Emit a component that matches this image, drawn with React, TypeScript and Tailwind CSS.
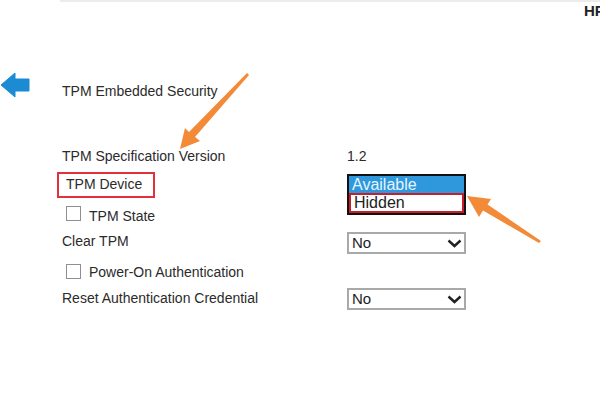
function Chevron() {
  return (
    <svg width="15" height="9" viewBox="0 0 15 9" className="shrink-0">
      <path d="M1.5 1.5 L7.5 7 L13.5 1.5" fill="none" stroke="#222" strokeWidth="2.4" />
    </svg>
  );
}

function SelectBox({ value }: { value: string }) {
  return (
    <div className="flex h-[22px] w-[119px] items-center justify-between border-2 border-[#a9a9a9] bg-white pl-[3px] pr-[2px]">
      <span className="text-[15px] leading-[16px] text-[#222]">{value}</span>
      <Chevron />
    </div>
  );
}

function Checkbox() {
  return <div className="h-[15px] w-[15px] shrink-0 border-[1.5px] border-[#8f8f8f] bg-white" />;
}

export default function App() {
  return (
    <div className="relative h-[400px] w-[600px] overflow-hidden bg-white font-['Liberation_Sans',Arial,sans-serif] text-[14px] leading-[16px] text-[#2b2b2b]">
      {/* header strip */}
      <div className="ml-[60px] h-[2px] bg-[#ececec]" />
      <div className="flex h-[17px] pl-[584px]">
        <span className="whitespace-nowrap text-[15px] font-bold leading-[17px] text-[#222]">HP</span>
      </div>

      {/* back + title */}
      <div className="mt-[53px] flex items-start">
        <svg width="30" height="26" viewBox="0 0 30 26" className="shrink-0">
          <polygon points="1,13 15,1 15,7 29,7 29,19 15,19 15,25" fill="#1b8bd3" strokeLinejoin="round" stroke="#1b8bd3" strokeWidth="1" />
        </svg>
        <div className="ml-[32px] mt-[11px]">TPM Embedded Security</div>
      </div>

      {/* settings */}
      <div className="mt-[49px] flex">
        <div className="ml-[62px] flex w-[285px] flex-col items-start">
          <div>TPM Specification Version</div>
          <div className="-ml-[5px] mt-[8px] h-[26px] w-[98px] border-2 border-[#e2303c] pl-[7px] pt-[2px]">TPM Device</div>
          <div className="mt-[8px] flex items-start pl-[4px]">
            <Checkbox />
            <span className="ml-[8px] mt-[2px]">TPM State</span>
          </div>
          <div className="mt-[9px]">Clear TPM</div>
          <div className="mt-[15px] flex items-start pl-[4px]">
            <Checkbox />
            <span className="ml-[8px]">Power-On Authentication</span>
          </div>
          <div className="mt-[10px]">Reset Authentication Credential</div>
        </div>

        <div className="flex flex-col items-start">
          <div>1.2</div>
          <div className="mt-[10px] w-[119px] border-2 border-[#111] bg-white text-[16px]">
            <div className="h-[17px] bg-[#2f97dc] pl-[3px] leading-[17px] text-[#e4f5ff]">Available</div>
            <div className="h-[20px] border-2 border-[#c81e2c] pl-[3px] leading-[16px] text-[#222]">Hidden</div>
          </div>
          <div className="mt-[17px]">
            <SelectBox value="No" />
          </div>
          <div className="mt-[34px]">
            <SelectBox value="No" />
          </div>
        </div>
      </div>

      {/* annotation arrows */}
      <svg width="600" height="400" viewBox="0 0 600 400" className="pointer-events-none absolute left-0 top-0">
        <polygon points="249,75 195,137 200,141 180,149 185,128 189,132 247,73" fill="#f28a38" />
        <polygon points="541,241 487.5,204.5 491,199 467,196 479,217 483,210.5 539,243" fill="#f28a38" />
      </svg>
    </div>
  );
}
